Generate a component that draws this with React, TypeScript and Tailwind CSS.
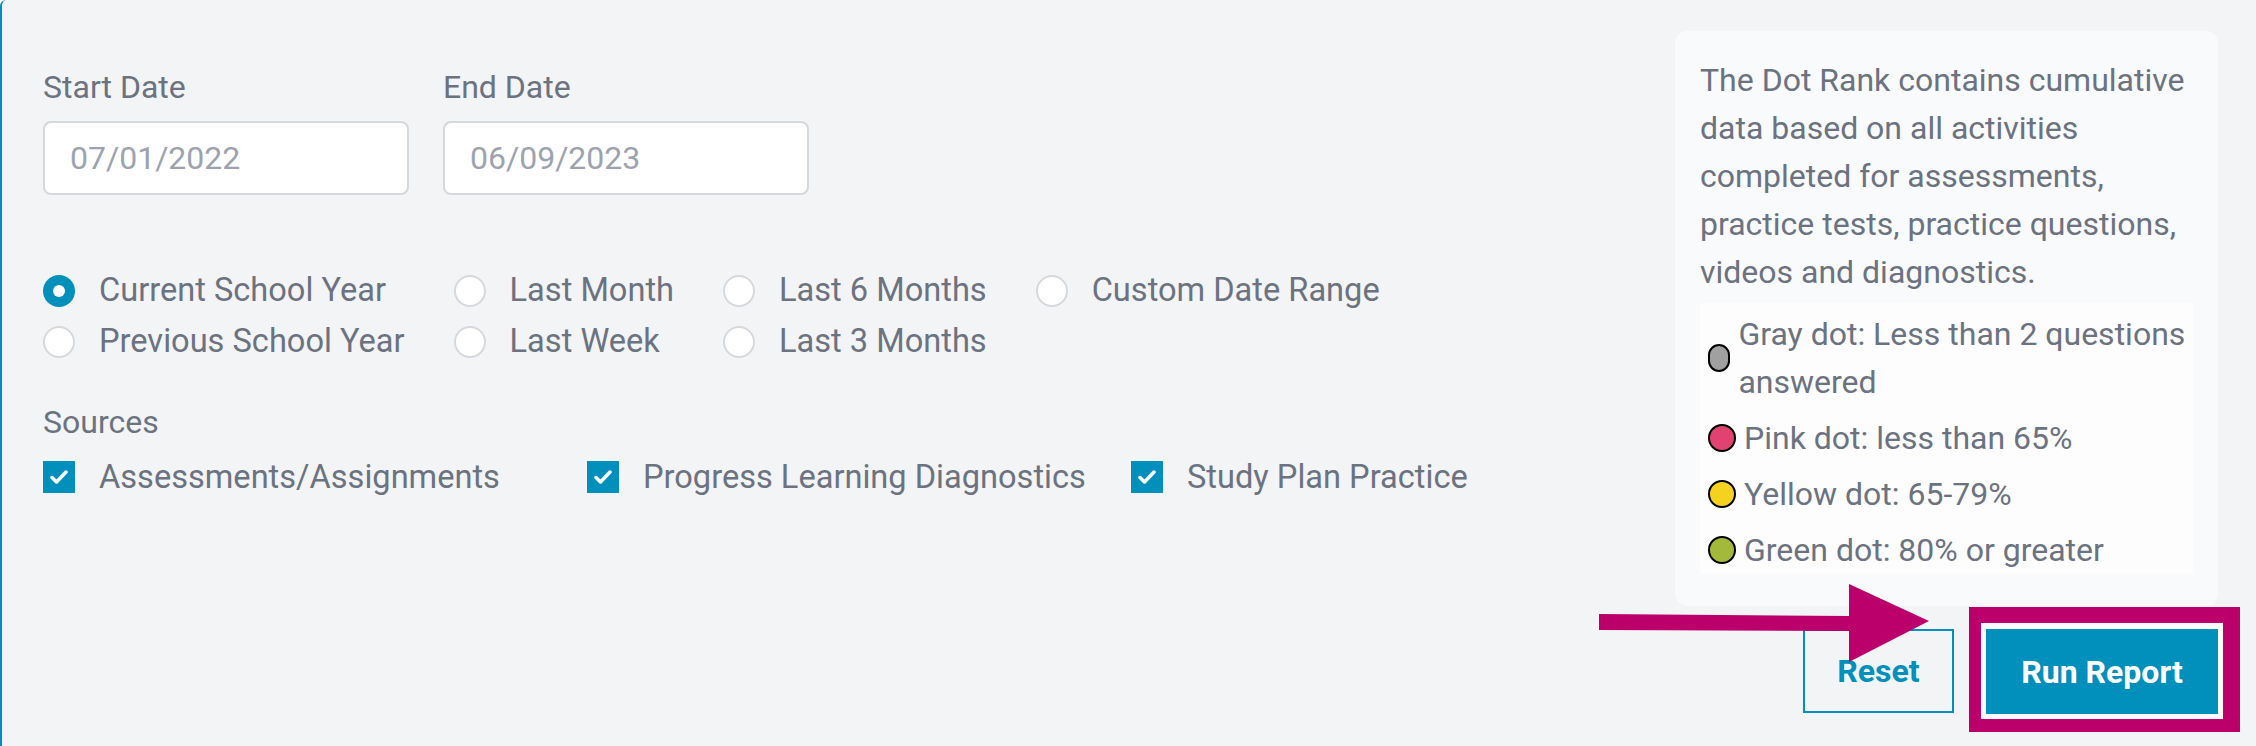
import React from 'react'

const blue = 'bg-[#0090bb]'

const ranges = [
  { label: 'Current School Year', checked: true },
  { label: 'Previous School Year' },
  { label: 'Last Month' },
  { label: 'Last Week' },
  { label: 'Last 6 Months' },
  { label: 'Last 3 Months' },
  { label: 'Custom Date Range' },
]

const sources = ['Assessments/Assignments', 'Progress Learning Diagnostics', 'Study Plan Practice']

const dots = [
  { color: 'bg-[#a0a0a0]', text: 'Gray dot: Less than 2 questions answered' },
  { color: 'bg-[#e2426f]', text: 'Pink dot: less than 65%' },
  { color: 'bg-[#f5d21f]', text: 'Yellow dot: 65-79%' },
  { color: 'bg-[#a3b93a]', text: 'Green dot: 80% or greater' },
]

function DateField({ label, value }: { label: string; value: string }) {
  return (
    <div className="flex flex-col">
      <label className="leading-[48px] mb-[10px]">{label}</label>
      <input
        readOnly
        value={value}
        className="w-[366px] h-[74px] rounded-[8px] border-2 border-[#d5d8dd] bg-white pl-[25px] text-[32px] text-[#9ca3af] outline-none"
      />
    </div>
  )
}

function Radio({ label, checked }: { label: string; checked?: boolean }) {
  return (
    <div className="flex items-center h-[51px] gap-[24px]">
      {checked ? (
        <span className={`w-[32px] h-[32px] rounded-full ${blue} flex items-center justify-center`}>
          <span className="w-[12px] h-[12px] rounded-full bg-white" />
        </span>
      ) : (
        <span className="w-[32px] h-[32px] rounded-full bg-white border-2 border-[#d5d8dd]" />
      )}
      <span className="text-[32.6px]">{label}</span>
    </div>
  )
}

function Check({ label }: { label: string }) {
  return (
    <div className="flex items-center w-[544px] h-[48px] gap-[24px]">
      <span className={`w-[32px] h-[32px] ${blue} flex items-center justify-center`}>
        <svg width="18" height="16" viewBox="0 0 18 16">
          <path d="M2 8.5 L6.5 13 L16 3" stroke="white" strokeWidth="3.5" fill="none" strokeLinecap="round" strokeLinejoin="round" />
        </svg>
      </span>
      <span className="text-[32.6px]">{label}</span>
    </div>
  )
}

export default function App() {
  return (
    <div
      className="relative w-full h-[746px] bg-[#f3f4f6] border-l-2 border-[#0090bb] rounded-tl-[6px] flex justify-between overflow-hidden text-[32px] text-[#6b7280]"
      style={{ fontFamily: 'Roboto, "Noto Sans", sans-serif' }}
    >
      {/* filters */}
      <div className="pl-[41px] pt-[63px] flex flex-col">
        <div className="flex gap-[34px]">
          <DateField label="Start Date" value="07/01/2022" />
          <DateField label="End Date" value="06/09/2023" />
        </div>

        <div className="grid grid-rows-2 grid-flow-col auto-cols-max gap-x-[49px] mt-[70px]">
          {ranges.map((r) => (
            <Radio key={r.label} label={r.label} checked={r.checked} />
          ))}
        </div>

        <div className="mt-[31px] leading-[48px]">Sources</div>
        <div className="flex mt-[7px]">
          {sources.map((s) => (
            <Check key={s} label={s} />
          ))}
        </div>
      </div>

      {/* legend + actions */}
      <div className="w-[544px] mt-[31px] mr-[38px] flex flex-col">
        <div className="rounded-[12px] bg-[#f9fafb] p-[25px] pb-[24px] leading-[48px]">
          <p>
            The Dot Rank contains cumulative data based on all activities completed for assessments, practice tests,
            practice questions, videos and diagnostics.
          </p>
          <div className="mt-[7px] bg-[#fdfdfd] pl-[8px] pt-[7px]">
            {dots.map((d) => (
              <div key={d.text} className="flex items-center gap-[8px] mb-[8px]">
                <span className={`w-[28px] h-[28px] rounded-full border-2 border-black ${d.color}`} />
                <span>{d.text}</span>
              </div>
            ))}
          </div>
        </div>

        <div className="flex justify-end gap-[32px] mt-[23px]">
          <button className="w-[151px] h-[84px] border-2 border-[#0090bb] text-[#0090bb] font-bold text-[32px]">
            Reset
          </button>
          <div className="relative">
            <span className="absolute left-[-17px] right-[-22px] top-[-22px] bottom-[-18px] border-[#bb006b] border-l-[12px] border-r-[17px] border-t-[16px] border-b-[13px]" />
            <span className="absolute left-[-5px] right-[-5px] top-[-6px] bottom-[-5px] bg-[#fbfbfb]" />
            <button className={`relative w-[232px] h-[85px] ${blue} text-white font-bold text-[32px]`}>Run Report</button>
          </div>
        </div>
      </div>

      {/* annotation arrow */}
      <svg className="absolute left-[1590px] top-[578px]" width="350" height="90" viewBox="0 0 350 90">
        <polygon points="7,36 257,38 257,53 7,52" fill="#bb006b" />
        <polygon points="257,6 337,43 257,84" fill="#bb006b" />
      </svg>
    </div>
  )
}
